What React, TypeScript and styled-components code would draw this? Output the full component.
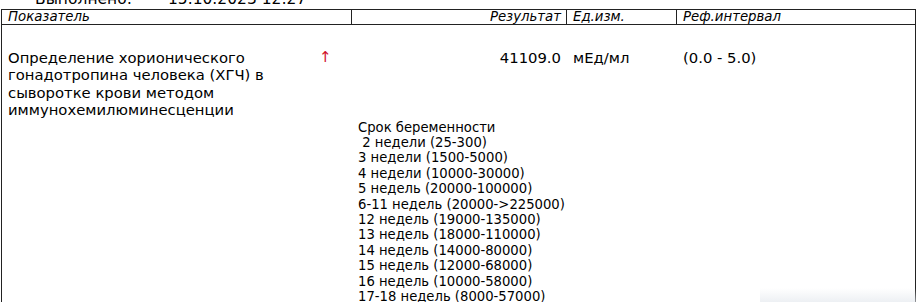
import React from "react";
import styled, { createGlobalStyle } from "styled-components";

const Global = createGlobalStyle`
  html, body { margin: 0; padding: 0; background: #fff; }
  body { font-family: "DejaVu Sans", sans-serif; color: #000; overflow: hidden; width: 918px; height: 302px; }
`;

const Page = styled.div`
  position: relative;
  width: 918px;
  height: 302px;
  overflow: hidden;
`;

const DoneLine = styled.div`
  display: flex;
  height: 9px;
  align-items: flex-end;
  font-size: 15.5px;
  line-height: 18px;
  padding-left: 35px;
  overflow: hidden;
  white-space: nowrap;
`;

const DoneInner = styled.div`
  display: flex;
  transform: translateY(-1px);
`;

const DoneLabel = styled.span`
  width: 133px;
`;

const Table = styled.div`
  margin-left: 1px;
  width: 915px;
  box-sizing: border-box;
  border-left: 1px solid #222;
  border-right: 1px solid #222;
`;

const HeadRow = styled.div`
  display: grid;
  grid-template-columns: 350px 215px 110px 1fr;
  border-top: 1px solid #222;
  border-bottom: 1px solid #222;
  height: 14px;
  font-style: italic;
  font-size: 13.3px;
  line-height: 14px;
`;

const HeadCell = styled.div<{ $right?: boolean; $last?: boolean }>`
  border-right: ${(p) => (p.$last ? "none" : "1px solid #222")};
  padding: 0 ${(p) => (p.$right ? "5px" : "6px")};
  text-align: ${(p) => (p.$right ? "right" : "left")};
  white-space: nowrap;
  overflow: hidden;
`;

const BodyRow = styled.div`
  display: grid;
  grid-template-columns: 350px 215px 110px 1fr;
  padding-top: 24px;
  font-size: 14.8px;
  line-height: 17.4px;
`;

const NameCell = styled.div`
  display: flex;
  padding-left: 6px;
`;

const NameText = styled.div`
  width: 300px;
`;

const Arrow = styled.span`
  color: #d0102a;
  margin-left: 11px;
  font-size: 15px;
`;

const ValueCell = styled.div<{ $right?: boolean }>`
  padding: 0 6px;
  text-align: ${(p) => (p.$right ? "right" : "left")};
  white-space: nowrap;
`;

const Note = styled.div`
  padding-left: 356px;
  padding-top: 1px;
  font-size: 13.2px;
  line-height: 15.4px;
  white-space: pre;
`;

const Shade = styled.div`
  position: absolute;
  left: 760px;
  right: 2px;
  bottom: 0;
  height: 14px;
  background: linear-gradient(to bottom, rgba(235, 238, 242, 0), rgba(225, 230, 236, 0.6));
  pointer-events: none;
`;

const noteLines = [
  "Срок беременности",
  " 2 недели (25-300)",
  "3 недели (1500-5000)",
  "4 недели (10000-30000)",
  "5 недель (20000-100000)",
  "6-11 недель (20000->225000)",
  "12 недель (19000-135000)",
  "13 недель (18000-110000)",
  "14 недель (14000-80000)",
  "15 недель (12000-68000)",
  "16 недель (10000-58000)",
  "17-18 недель (8000-57000)",
];

export default function App() {
  return (
    <Page>
      <Global />
      <DoneLine>
        <DoneInner>
          <DoneLabel>Выполнено:</DoneLabel>
          <span>15.10.2023 12:27</span>
        </DoneInner>
      </DoneLine>
      <Table>
        <HeadRow>
          <HeadCell>Показатель</HeadCell>
          <HeadCell $right>Результат</HeadCell>
          <HeadCell>Ед.изм.</HeadCell>
          <HeadCell $last>Реф.интервал</HeadCell>
        </HeadRow>
        <BodyRow>
          <NameCell>
            <NameText>
              Определение хорионического гонадотропина человека (ХГЧ) в сыворотке крови методом иммунохемилюминесценции
            </NameText>
            <Arrow>↑</Arrow>
          </NameCell>
          <ValueCell $right>41109.0</ValueCell>
          <ValueCell>мЕд/мл</ValueCell>
          <ValueCell>(0.0 - 5.0)</ValueCell>
        </BodyRow>
        <Note>{noteLines.join("\n")}</Note>
      </Table>
      <Shade />
    </Page>
  );
}
